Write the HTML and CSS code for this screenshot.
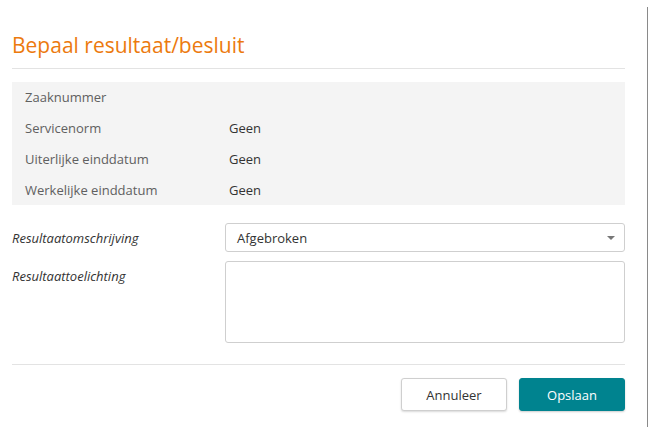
FILE: index.html
```html
<!DOCTYPE html>
<html lang="nl">
<head>
<meta charset="utf-8">
<link rel="stylesheet" href="styles.css">
</head>
<body>
<div class="frame">
  <div class="dialog">
    <h1 class="title">Bepaal resultaat/besluit</h1>
    <div class="info">
      <div class="row"><span class="label">Zaaknummer</span><span class="value"></span></div>
      <div class="row"><span class="label">Servicenorm</span><span class="value">Geen</span></div>
      <div class="row"><span class="label">Uiterlijke einddatum</span><span class="value">Geen</span></div>
      <div class="row"><span class="label">Werkelijke einddatum</span><span class="value">Geen</span></div>
    </div>
    <div class="form">
      <div class="field">
        <span class="flabel">Resultaatomschrijving</span>
        <div class="select">
          <span>Afgebroken</span>
          <svg class="caret" width="8" height="4" viewBox="0 0 8 4"><path d="M0 0H8L4 4Z" fill="#777"/></svg>
        </div>
      </div>
      <div class="field">
        <span class="flabel">Resultaattoelichting</span>
        <div class="textarea"></div>
      </div>
    </div>
    <div class="footer">
      <button class="btn btn-secondary">Annuleer</button>
      <button class="btn btn-primary">Opslaan</button>
    </div>
  </div>
</div>
</body>
</html>
```
FILE: styles.css
```css
html, body {
  margin: 0;
  padding: 0;
  background: #fff;
}
body {
  font-family: "Open Sans", "Liberation Sans", sans-serif;
  color: #333;
  width: 652px;
  height: 427px;
  overflow: hidden;
}
.frame {
  display: flex;
  padding-top: 7px;
  height: 420px;
}
.dialog {
  width: 613px;
  padding: 0 22px 0 12px;
  border-right: 1px solid #8a8a8a;
}
.title {
  margin: 0;
  padding-top: 24px;
  font-size: 21px;
  line-height: 29px;
  font-weight: 400;
  color: #ec7a0e;
  padding-bottom: 8px;
  border-bottom: 1px solid #e3e3e3;
}
.info {
  margin-top: 13px;
  background: #f4f4f4;
  padding: 0 13px;
}
.row {
  display: flex;
  height: 30.75px;
  align-items: center;
  font-size: 13px;
}
.label {
  width: 204px;
  color: #606060;
}
.value {
  color: #333;
}
.form {
  padding-top: 18px;
  display: flex;
  flex-direction: column;
  gap: 9px;
}
.field {
  display: flex;
}
.flabel {
  width: 213px;
  font-style: italic;
  font-size: 13px;
  color: #333;
  padding-top: 6px;
}
.select {
  flex: 1;
  height: 29px;
  box-sizing: border-box;
  border: 1px solid #cfcfcf;
  border-radius: 3px;
  display: flex;
  align-items: center;
  justify-content: space-between;
  padding: 0 9px 0 11px;
  font-size: 13px;
  color: #333;
}
.caret {
  display: block;
}
.textarea {
  flex: 1;
  height: 82px;
  box-sizing: border-box;
  border: 1px solid #cfcfcf;
  border-radius: 3px;
}
.footer {
  margin-top: 21px;
  border-top: 1px solid #e3e3e3;
  padding-top: 13px;
  display: flex;
  justify-content: flex-end;
  gap: 12px;
}
.btn {
  font-family: "Open Sans", "Liberation Sans", sans-serif;
  font-size: 13px;
  height: 33px;
  width: 106px;
  border-radius: 3px;
  cursor: pointer;
}
.btn-secondary {
  background: #fff;
  color: #333;
  border: 1px solid #cfcfcf;
  box-shadow: 0 1px 2px rgba(0,0,0,0.15);
}
.btn-primary {
  background: #00838f;
  color: #fff;
  border: 1px solid #00838f;
  font-weight: 500;
  box-shadow: 0 1px 2px rgba(0,0,0,0.2);
}
```
